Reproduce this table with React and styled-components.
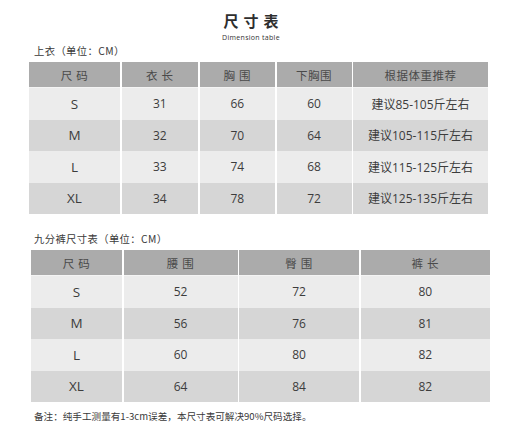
import React from "react";
import styled, { createGlobalStyle } from "styled-components";

const GlobalStyle = createGlobalStyle`
  body {
    margin: 0;
    background: #fff;
    font-family: "Open Sans", "Noto Sans CJK SC", sans-serif;
    color: #3e3e3e;
  }
`;

const Page = styled.div`
  width: 520px;
  height: 441px;
  padding-top: 13px;
  box-sizing: border-box;
  overflow: hidden;
`;

const Heading = styled.header`
  display: flex;
  flex-direction: column;
  align-items: center;
  padding-right: 18px;
  h1 {
    margin: 0 0 0 5px;
    font-family: "Noto Sans CJK SC", sans-serif;
    font-size: 15px;
    line-height: 16px;
    font-weight: 700;
    letter-spacing: 5px;
    color: #2e2e2e;
  }
  .sub {
    margin-top: 5px;
    font-size: 7px;
    line-height: 8px;
    letter-spacing: 0.3px;
    color: #333;
  }
`;

const Caption = styled.div`
  margin: ${(p) => p.$top || 0}px 0 0 34px;
  font-family: "Noto Sans CJK SC", sans-serif;
  font-size: 10.3px;
  line-height: 12px;
  letter-spacing: 0.4px;
  color: #3a3a3a;
`;

const Table = styled.div`
  display: grid;
  grid-template-columns: ${(p) => p.$cols};
  width: ${(p) => p.$width}px;
  margin: ${(p) => p.$top || 0}px 0 0 ${(p) => p.$left}px;
  column-gap: 1.5px;
  background: #fff;
`;

const Cell = styled.div`
  display: flex;
  align-items: center;
  justify-content: center;
  height: ${(p) => (p.$head ? 26 : 31.5)}px;
  background: ${(p) => (p.$head ? "#ababab" : p.$odd ? "#d6d6d6" : "#ececec")};
  border-bottom: ${(p) => (p.$head ? "1px solid #f4f4f4" : "none")};
  box-sizing: border-box;
  font-family: "Open Sans", "Noto Sans CJK SC", sans-serif;
  font-size: ${(p) => (p.$head ? 11.5 : p.$size ? 13.5 : 12)}px;
  letter-spacing: ${(p) => (p.$head ? "0.5px" : "0")};
  color: ${(p) => (p.$head ? "#4a4a4a" : "#3c3c3c")};
  white-space: pre;
`;

const Note = styled.div`
  margin: 8px 0 0 34px;
  font-family: "Noto Sans CJK SC", sans-serif;
  font-size: 9.6px;
  line-height: 12px;
  color: #3a3a3a;
`;

const topHead = ["尺 码", "衣 长", "胸 围", "下胸围", "根据体重推荐"];
const topRows = [
  ["S", "31", "66", "60", "建议85-105斤左右"],
  ["M", "32", "70", "64", "建议105-115斤左右"],
  ["L", "33", "74", "68", "建议115-125斤左右"],
  ["XL", "34", "78", "72", "建议125-135斤左右"],
];

const pantsHead = ["尺 码", "腰 围", "臀 围", "裤 长"];
const pantsRows = [
  ["S", "52", "72", "80"],
  ["M", "56", "76", "81"],
  ["L", "60", "80", "82"],
  ["XL", "64", "84", "82"],
];

const SizeTable = ({ head, rows, ...rest }) => (
  <Table {...rest}>
    {head.map((h) => (
      <Cell key={h} $head>
        {h}
      </Cell>
    ))}
    {rows.map((row, i) =>
      row.map((v, j) => (
        <Cell key={`${i}-${j}`} $odd={i % 2 === 1} $size={j === 0}>
          {v}
        </Cell>
      ))
    )}
  </Table>
);

export default function App() {
  return (
    <Page>
      <GlobalStyle />
      <Heading>
        <h1>尺寸表</h1>
        <div className="sub">Dimension table</div>
      </Heading>
      <Caption $top={3}>上衣（单位：CM）</Caption>
      <SizeTable
        head={topHead}
        rows={topRows}
        $cols="91px 76.5px 75.5px 75px 135px"
        $width={459}
        $left={29}
        $top={5}
      />
      <Caption $top={19}>九分裤尺寸表（单位：CM）</Caption>
      <SizeTable
        head={pantsHead}
        rows={pantsRows}
        $cols="91px 114px 120px 129.5px"
        $width={457}
        $left={31}
        $top={5}
      />
      <Note>备注：纯手工测量有1-3cm误差，本尺寸表可解决90%尺码选择。</Note>
    </Page>
  );
}
